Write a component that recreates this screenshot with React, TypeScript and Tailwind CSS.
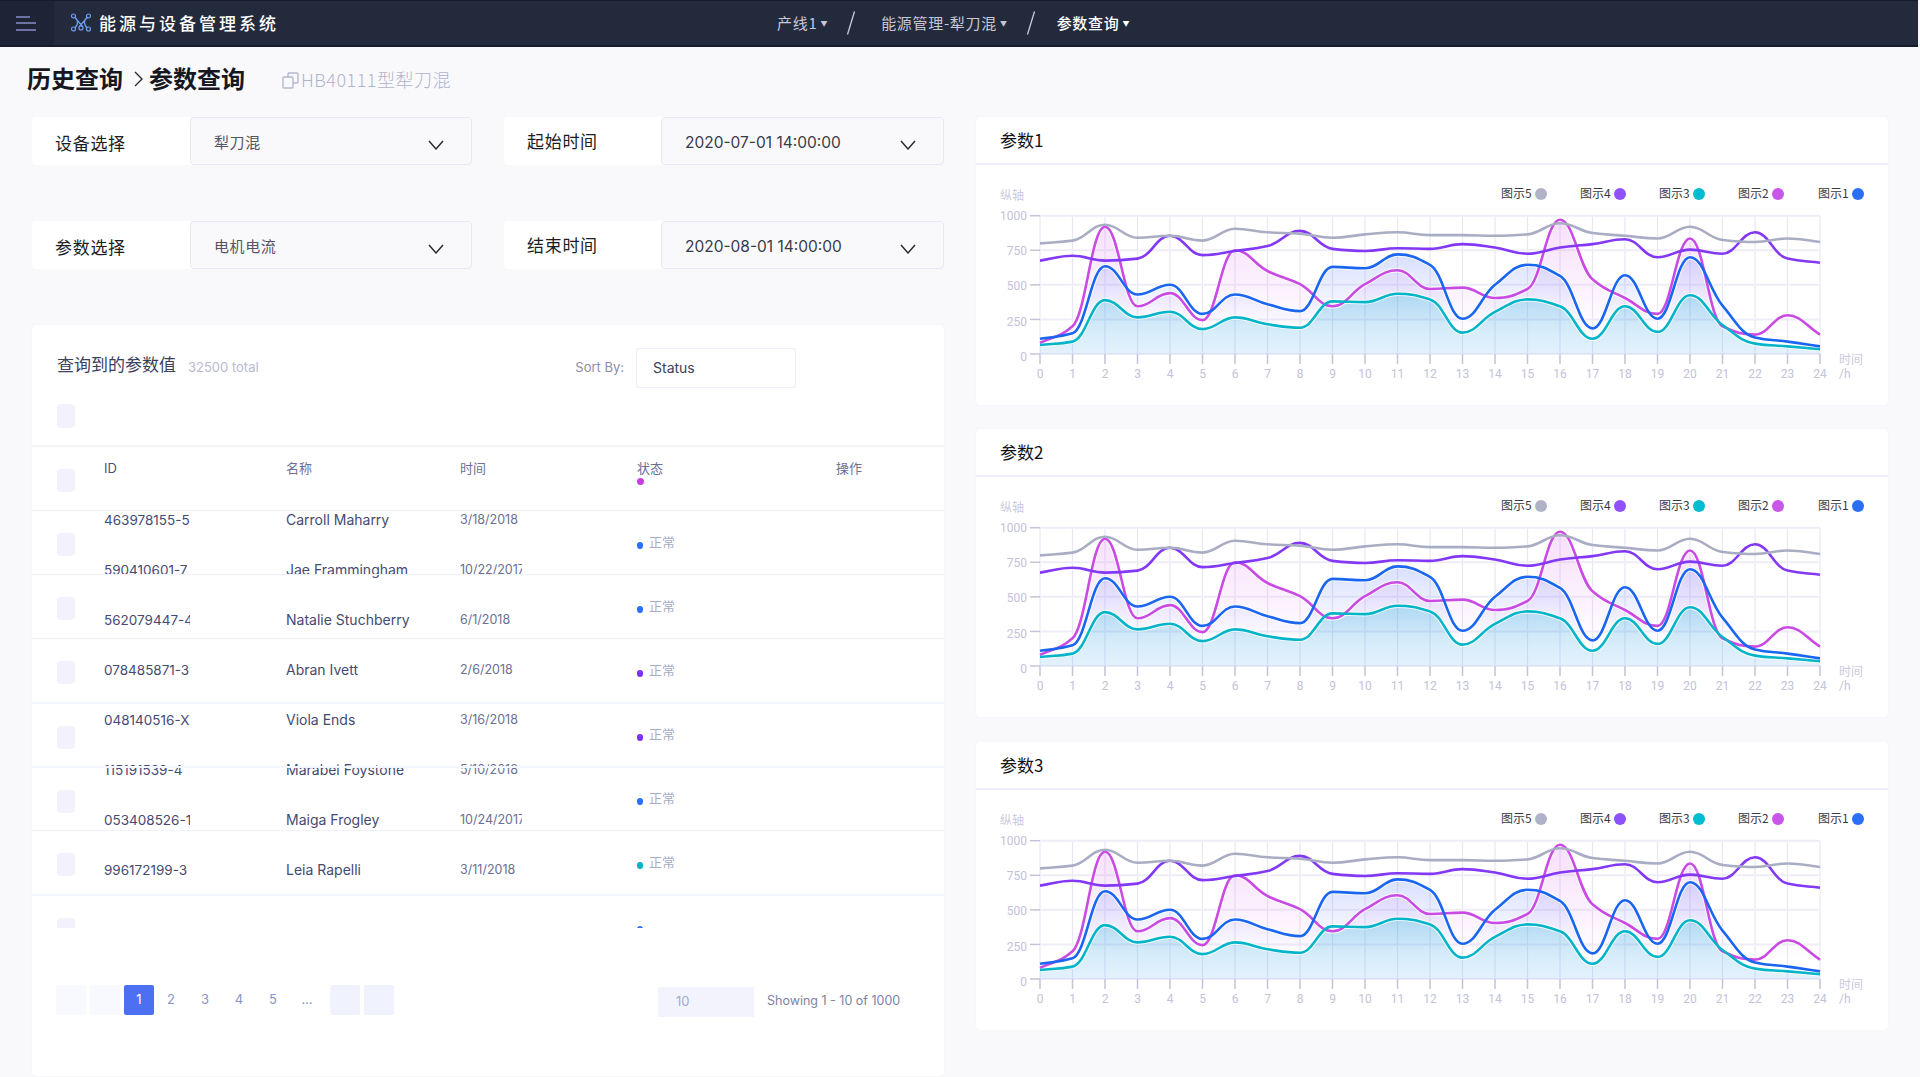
import React from "react";

const X = (h: number) => 64 + 32.5 * h;
const Y = (v: number) => 189 - v * 0.1383;

function curve(vals: number[]) {
  const k = 0.42;
  const hx = 32.5;
  const ys = vals.map(Y);
  const d = ys.slice(1).map((y, i) => (y - ys[i]) / hx);
  const m = ys.map((_, i) => {
    if (i === 0) return d[0];
    if (i === ys.length - 1) return d[i - 1];
    if (d[i - 1] * d[i] <= 0) return 0;
    return (2 * d[i - 1] * d[i]) / (d[i - 1] + d[i]);
  });
  let p = `M${X(0)} ${ys[0].toFixed(1)}`;
  for (let i = 0; i < ys.length - 1; i++) {
    const x1 = X(i) + k * hx;
    const y1 = ys[i] + m[i] * k * hx;
    const x2 = X(i + 1) - k * hx;
    const y2 = ys[i + 1] - m[i + 1] * k * hx;
    p += `C${x1.toFixed(1)} ${y1.toFixed(1)} ${x2.toFixed(1)} ${y2.toFixed(1)} ${X(i + 1)} ${ys[i + 1].toFixed(1)}`;
  }
  return p;
}

const gray = [800, 820, 935, 840, 855, 820, 905, 880, 870, 840, 865, 880, 860, 860, 855, 865, 945, 875, 855, 835, 920, 825, 810, 835, 810];
const purple = [675, 710, 675, 690, 855, 715, 745, 780, 890, 760, 745, 765, 760, 795, 770, 725, 770, 795, 830, 700, 755, 725, 880, 690, 660];
const magenta = [80, 200, 920, 345, 440, 245, 750, 600, 505, 345, 505, 605, 470, 480, 405, 470, 970, 540, 405, 290, 835, 200, 140, 280, 140];
const blue = [110, 150, 635, 430, 500, 290, 430, 360, 310, 630, 620, 720, 645, 255, 500, 645, 565, 185, 570, 255, 700, 350, 120, 90, 55];
const cyan = [65, 90, 390, 265, 305, 180, 265, 215, 190, 380, 375, 435, 395, 155, 305, 395, 345, 110, 345, 160, 425, 210, 75, 55, 35];

const area = (vals: number[]) => `${curve(vals)}L${X(24)} 189L${X(0)} 189Z`;

const legend = [
  { t: "图示5", x: 525, c: 565, f: "#b0b3c8" },
  { t: "图示4", x: 604, c: 644, f: "#8f52f8" },
  { t: "图示3", x: 683, c: 723, f: "#00bcd0" },
  { t: "图示2", x: 762, c: 802, f: "#c856e8" },
  { t: "图示1", x: 842, c: 882, f: "#2a6ff8" },
];

const hours = Array.from({ length: 25 }, (_, i) => i);
const axisFont = "Roboto, sans-serif";
const cjkFont = "'Noto Sans CJK SC', sans-serif";

function Chart({ id }: { id: string }) {
  return (
    <svg width="912" height="240" viewBox="0 0 912 240" className="block">
      <defs>
        <linearGradient id={`${id}c`} gradientUnits="userSpaceOnUse" x1="0" y1="125" x2="0" y2="189">
          <stop offset="0" stopColor="#00b4d0" stopOpacity="0.27" />
          <stop offset="1" stopColor="#2088ee" stopOpacity="0.12" />
        </linearGradient>
        <linearGradient id={`${id}b`} gradientUnits="userSpaceOnUse" x1="0" y1="80" x2="0" y2="160">
          <stop offset="0" stopColor="#3a62ff" stopOpacity="0.22" />
          <stop offset="1" stopColor="#3a62ff" stopOpacity="0" />
        </linearGradient>
        <linearGradient id={`${id}m`} gradientUnits="userSpaceOnUse" x1="0" y1="55" x2="0" y2="170">
          <stop offset="0" stopColor="#d24be8" stopOpacity="0.18" />
          <stop offset="1" stopColor="#d24be8" stopOpacity="0" />
        </linearGradient>
      </defs>
      <text x="24" y="35" fontSize="12" fontFamily={cjkFont} fill="#cacadd">纵轴</text>
      {legend.map((l) => (
        <g key={l.t}>
          <text x={l.x} y="33" fontSize="12" fontFamily={cjkFont} fill="#3a3a44">{l.t}</text>
          <circle cx={l.c} cy="29" r="6" fill={l.f} />
        </g>
      ))}
      {hours.map((h) => (
        <line key={h} x1={X(h)} x2={X(h)} y1="51" y2="189" stroke="#e9e7f6" strokeWidth="1.2" />
      ))}
      {[0, 250, 500, 750, 1000].map((v) => (
        <line key={v} x1="64" x2="844" y1={Y(v)} y2={Y(v)} stroke="#eeedf8" strokeWidth="2" />
      ))}
      <path d={area(magenta)} fill={`url(#${id}m)`} />
      <path d={area(blue)} fill={`url(#${id}b)`} />
      <path d={area(cyan)} fill={`url(#${id}c)`} />
      {[0, 250, 500, 750, 1000].map((v) => (
        <g key={v}>
          <line x1="54" x2="64" y1={Y(v)} y2={Y(v)} stroke="#c5c3da" strokeWidth="1.5" />
          <text x="51" y={Y(v) + 4 + (1000 - v) * 0.003} textAnchor="end" fontSize="12" fontFamily={axisFont} fill="#c3c2d8">{v}</text>
        </g>
      ))}
      {hours.map((h) => (
        <g key={h}>
          <line x1={X(h)} x2={X(h)} y1="189" y2="199" stroke="#c5c3da" strokeWidth="1.5" />
          <text x={X(h)} y="213" textAnchor="middle" fontSize="12" fontFamily={axisFont} fill="#c3c2d8">{h}</text>
        </g>
      ))}
      <text x="863" y="199" fontSize="12" fontFamily={cjkFont} fill="#cacadd">时间</text>
      <text x="863" y="213" fontSize="12" fontFamily={axisFont} fill="#c3c2d8">/h</text>
      {[magenta, blue, cyan].map((v, i) => (
        <path key={i} d={curve(v)} fill="none" stroke="#ffffff" strokeWidth="4.6" strokeOpacity="0.8" />
      ))}
      <path d={curve(magenta)} fill="none" stroke="#c94be3" strokeWidth="2.6" />
      <path d={curve(blue)} fill="none" stroke="#1a66f0" strokeWidth="2.6" />
      <path d={curve(cyan)} fill="none" stroke="#04b4c8" strokeWidth="2.6" />
      <path d={curve(purple)} fill="none" stroke="#8238f5" strokeWidth="2.6" />
      <path d={curve(gray)} fill="none" stroke="#a9adc4" strokeWidth="2.6" />
    </svg>
  );
}

function ChartCard({ title, id, extra }: { title: string; id: string; extra?: boolean }) {
  return (
    <section className={`h-[288px] w-[912px] rounded-[4px] bg-white shadow-[0_0_2px_#eeeef8] ${extra ? "mt-[25px]" : "mt-6"}`}>
      <div className="flex h-[48px] items-center border-b-2 border-[#eeedfa] pl-6 text-[17px] text-[#111118]">{title}</div>
      <Chart id={id} />
    </section>
  );
}

function Chevron() {
  return (
    <svg width="16" height="10" viewBox="0 0 16 10" className="mt-[7px] shrink-0">
      <path d="M1 1l7 8 7-8" fill="none" stroke="#24242e" strokeWidth="1.4" />
    </svg>
  );
}

function Field({ label, value, latin }: { label: string; value: string; latin?: boolean }) {
  return (
    <div className="flex h-[48px] rounded-[4px] bg-white">
      <div
        className={
          latin
            ? "flex w-[157px] items-center pb-[1px] pl-[23px] text-[17px] tracking-[0.7px] text-[#1c1c24]"
            : "flex w-[158px] items-center pt-[3px] pl-[23px] text-[17px] tracking-[0.7px] text-[#1c1c24]"
        }
      >
        {label}
      </div>
      <div className="flex flex-1 items-center justify-between rounded-[4px] border border-[#e7e7f6] bg-[#f9f9fc] pl-[23px] pr-[27px]">
        <span
          className={
            latin
              ? "pt-[4px] font-['Inter','Noto_Sans_CJK_SC',sans-serif] text-[15.5px] text-[#3a3a48]"
              : "pt-[2px] text-[15px] tracking-[0.6px] text-[#55555f]"
          }
        >
          {value}
        </span>
        <Chevron />
      </div>
    </div>
  );
}

const names = [
  ["463978155-5", "Carroll Maharry", "3/18/2018"],
  ["590410601-7", "Jae Frammingham", "10/22/2017"],
  ["562079447-4", "Natalie Stuchberry", "6/1/2018"],
  ["078485871-3", "Abran Ivett", "2/6/2018"],
  ["048140516-X", "Viola Ends", "3/16/2018"],
  ["115191539-4", "Marabei Foystone", "5/10/2018"],
  ["053408526-1", "Maiga Frogley", "10/24/2017"],
  ["996172199-3", "Leia Rapelli", "3/11/2018"],
];

const statusRows = [
  { dot: "bg-[#2a6ff8]", thick: false },
  { dot: "bg-[#2a6ff8]", thick: false },
  { dot: "bg-[#7a30f5]", thick: false },
  { dot: "bg-[#7a30f5]", thick: true },
  { dot: "bg-[#2a6ff8]", thick: true },
  { dot: "bg-[#04b4c8]", thick: false },
  { dot: "bg-[#2a6ff8]", thick: true },
];

function Check() {
  return <div className="mt-[22px] h-[23px] w-[18px] shrink-0 rounded-[4px] bg-[#f1f2fc]" />;
}

function Table() {
  return (
    <section className="mt-[56px] flex h-[751px] w-[912px] flex-col rounded-[4px] bg-white font-['Inter','Noto_Sans_CJK_SC',sans-serif] shadow-[0_0_2px_#eeeef8]">
      <div className="flex h-[79px] items-start pl-[25px] pr-[148px] pt-[23px]">
        <div className="flex h-[40px] w-full items-center">
          <span className="-mt-[4px] text-[17px] text-[#3c3f5c]">查询到的参数值</span>
          <span className="ml-3 text-[13px] text-[#b8bad0]">32500 total</span>
          <span className="ml-auto text-[13px] text-[#8b8ea8]">Sort By:</span>
          <div className="ml-3 flex h-[40px] w-[160px] items-center rounded-[3px] border border-[#eeeef8] pb-[2px] pl-4 text-[14px] text-[#3c3f5c]">Status</div>
        </div>
      </div>
      <div className="h-[41px] pl-[25px]">
        <div className="h-[24px] w-[18px] rounded-[4px] bg-[#f1f2fc]" />
      </div>
      <div className="relative h-[483px] overflow-hidden">
        <div className="absolute left-[72px] top-[50px] text-[#454a72]">
          {names.map((n) => (
            <div key={n[0]} className="flex h-[50px] items-center whitespace-nowrap">
              <div className="w-[182px] text-[13.5px]">
                <div className="w-[86px] overflow-hidden">{n[0]}</div>
              </div>
              <div className="-mt-[2px] w-[174px] overflow-hidden text-[14px]">{n[1]}</div>
              <div className="w-[62px] overflow-hidden text-[12.5px] text-[#6b6f93]">{n[2]}</div>
            </div>
          ))}
        </div>
        <div className="relative">
          <div className="flex h-[65px] border-t-2 border-[#f4f5fc] pl-[25px] text-[13px] text-[#6c7094]">
            <Check />
            <div className="ml-[29px] mt-[12px] w-[182px] text-[#4a4f7a]">ID</div>
            <div className="mt-[12px] w-[174px]">名称</div>
            <div className="mt-[12px] w-[177px]">时间</div>
            <div className="mt-[12px] w-[199px]">
              <div>状态</div>
              <div className="-mt-[1px] h-[7px] w-[7px] rounded-full bg-[#c73fe0]" />
            </div>
            <div className="mt-[12px]">操作</div>
          </div>
          {statusRows.map((r, i) => (
            <div key={i} className={`flex h-[64px] pl-[25px] ${r.thick ? "border-t-2 border-[#f3f6fc]" : "border-t border-[#f1f1fb]"}`}>
              <Check />
              <div className={`ml-[562px] flex items-start gap-[6px] text-[13px] text-[#a9acc4] ${r.thick ? "mt-[21px]" : "mt-[22px]"}`}>
                <span className={`mt-[9px] h-[7px] w-[6px] rounded-full ${r.dot}`} />
                {i < statusRows.length - 1 && <span>正常</span>}
              </div>
            </div>
          ))}
        </div>
      </div>
      <div className="mt-[57px] flex items-start pl-[24px]">
        <div className="h-[30px] w-[30px] rounded-[2px] bg-[#f8f9fe]" />
        <div className="ml-1 h-[30px] w-[30px] rounded-[2px] bg-[#f8f9fe]" />
        <div className="ml-1 flex h-[30px] w-[30px] items-center justify-center rounded-[2px] bg-[#4d6ff2] text-[13px] text-white">1</div>
        {["2", "3", "4", "5", "..."].map((p) => (
          <div key={p} className="ml-1 flex h-[30px] w-[30px] items-center justify-center pr-1 text-[13px] text-[#8a92c4]">{p}</div>
        ))}
        <div className="ml-[6px] h-[30px] w-[30px] rounded-[2px] bg-[#f0f2fd]" />
        <div className="ml-1 h-[30px] w-[30px] rounded-[2px] bg-[#f0f2fd]" />
        <div className="ml-[264px] mt-[2px] flex h-[30px] w-[96px] items-center bg-[#f2f3fd] pl-[18px] text-[13px] text-[#a3aad2]">10</div>
        <div className="ml-[13px] mt-[1px] flex h-[30px] items-center whitespace-nowrap text-[12.5px] text-[#7f839f]">Showing 1 - 10 of 1000</div>
      </div>
    </section>
  );
}

function Caret({ cls }: { cls: string }) {
  return <span className={`ml-[3px] mt-[1px] text-[7px] ${cls}`}>▼</span>;
}

function Slash() {
  return (
    <svg width="10" height="24" viewBox="0 0 10 24" className="shrink-0">
      <path d="M8.5 0.5L1.5 23.5" stroke="#c8cbe0" strokeWidth="1.3" />
    </svg>
  );
}

export default function App() {
  return (
    <div className="h-[1077px] w-[1920px] overflow-hidden bg-[#f9f9fc] font-['Noto_Sans_CJK_SC','Noto_Sans',sans-serif]">
      <header className="flex h-[47px] w-[1918px] items-center border-b-2 border-t border-[#181d2c] bg-[#232a3b]">
        <div className="flex h-full w-[54px] flex-col items-start justify-center gap-[4.5px] bg-[#1e2435] pl-4">
          <span className="h-[2px] w-[14px] bg-[#6d71a3]" />
          <span className="h-[2px] w-5 bg-[#6d71a3]" />
          <span className="h-[2px] w-5 bg-[#6d71a3]" />
        </div>
        <svg width="22" height="20" viewBox="0 0 22 20" className="ml-[16px] shrink-0" fill="none" stroke="#6f9ff5" strokeWidth="1.2">
          <path d="M4 3.5L13 14M18 3.5L9 14M4 3.5Q11 9 4 16M18 3.5Q11 9 18 16" />
          <circle cx="3.5" cy="3" r="2" fill="#232a3b" />
          <circle cx="18.5" cy="3" r="2" fill="#232a3b" />
          <circle cx="3.5" cy="16" r="2" fill="#232a3b" />
          <circle cx="18.5" cy="16" r="2" fill="#232a3b" />
          <circle cx="11" cy="15" r="2" fill="#232a3b" />
        </svg>
        <div className="ml-[7px] w-[178px] whitespace-nowrap text-[17px] font-medium tracking-[3px] text-white">能源与设备管理系统</div>
        <div className="ml-[500px] flex items-center text-[15px] tracking-[0.7px] text-[#c5c8d8]">
          <span>产线1</span>
          <Caret cls="text-[#c5c8d8]" />
          <div className="ml-[18px] mr-[25px]"><Slash /></div>
          <span>能源管理-犁刀混</span>
          <Caret cls="text-[#c5c8d8]" />
          <div className="ml-[18px] mr-[21px]"><Slash /></div>
          <span className="font-medium text-white">参数查询</span>
          <Caret cls="text-white" />
        </div>
      </header>
      <div className="flex gap-8 pl-8">
        <div className="w-[912px]">
          <div className="-ml-[5px] flex h-[70px] items-center pb-[9px]">
            <span className="text-[24px] font-semibold leading-none text-[#17171f]">历史查询</span>
            <svg width="10" height="16" viewBox="0 0 10 16" className="ml-[11px] mr-[5px] mt-[3px]">
              <path d="M1 1l7 7-7 7" fill="none" stroke="#2a2a33" strokeWidth="1.4" />
            </svg>
            <span className="text-[24px] font-semibold leading-none text-[#17171f]">参数查询</span>
            <svg width="17" height="17" viewBox="0 0 17 17" className="ml-[37px] mt-[5px]" fill="none" stroke="#b4b7d2" strokeWidth="1.4">
              <rect x="6" y="1" width="10" height="10" rx="1" />
              <rect x="1" y="5" width="10" height="11" rx="1" fill="#f9f9fc" />
            </svg>
            <span className="ml-[2px] mt-[4px] text-[18px] font-light tracking-[0.5px] text-[#b0b3cd]">HB40111型犁刀混</span>
          </div>
          <div className="grid grid-cols-[440px_440px] gap-x-[32px] gap-y-[56px]">
            <Field label="设备选择" value="犁刀混" />
            <Field label="起始时间" value="2020-07-01 14:00:00" latin />
            <Field label="参数选择" value="电机电流" />
            <Field label="结束时间" value="2020-08-01 14:00:00" latin />
          </div>
          <Table />
        </div>
        <div className="pt-[46px]">
          <ChartCard title="参数1" id="a" />
          <ChartCard title="参数2" id="d" />
          <ChartCard title="参数3" id="e" extra />
        </div>
      </div>
    </div>
  );
}
